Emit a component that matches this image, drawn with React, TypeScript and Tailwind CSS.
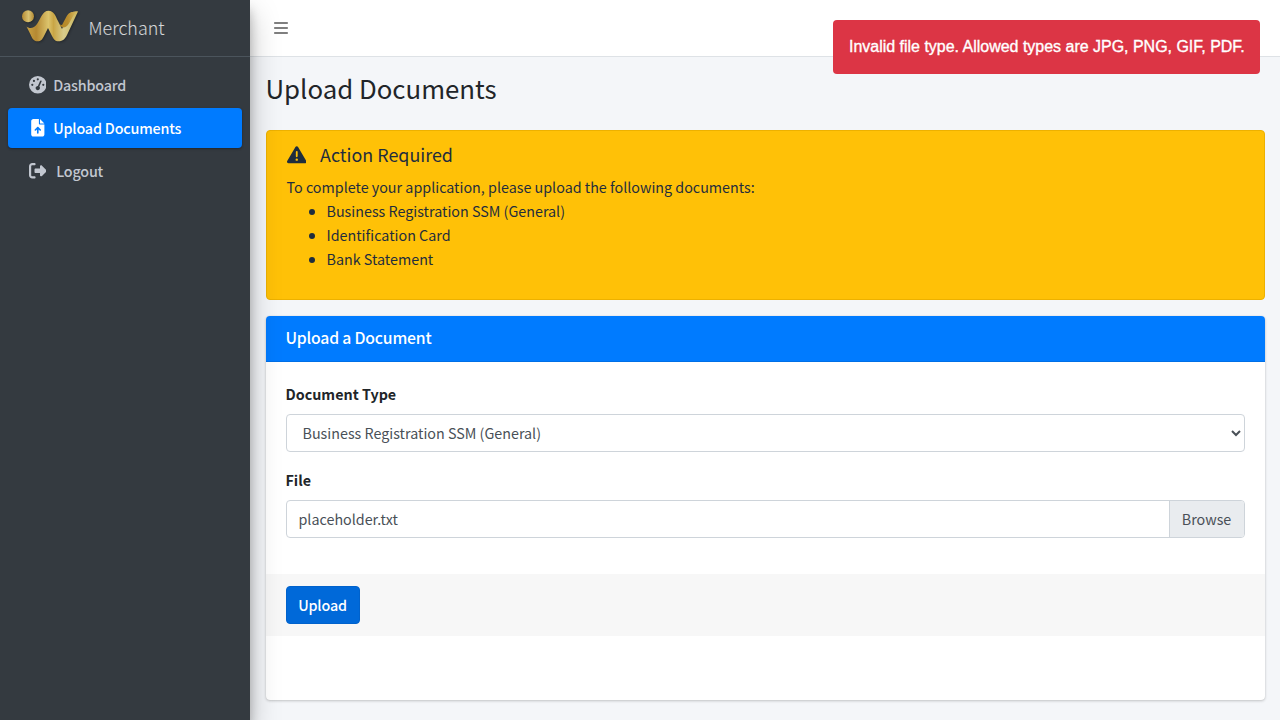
import type { ReactNode } from "react";
import { FaBars, FaFileArrowUp, FaGaugeHigh, FaRightFromBracket, FaTriangleExclamation } from "react-icons/fa6";

const requiredDocuments = ["Business Registration SSM (General)", "Identification Card", "Bank Statement"];

function Logo() {
  return (
    <svg aria-hidden className="mt-[3px] ml-[21px] h-[35px] w-[59px] drop-shadow-[1px_1px_1px_rgba(0,0,0,0.3)]" viewBox="0 0 59 35">
      <defs>
        <linearGradient id="gold-dot" x1="0" x2="1" y1="0" y2="0">
          <stop offset="0" stopColor="#b58a32" />
          <stop offset="0.55" stopColor="#d9c272" />
          <stop offset="1" stopColor="#b38a35" />
        </linearGradient>
        <linearGradient gradientUnits="userSpaceOnUse" id="gold-wave" x1="6" x2="57" y1="0" y2="0">
          <stop offset="0" stopColor="#c9a243" />
          <stop offset="0.18" stopColor="#b58832" />
          <stop offset="0.42" stopColor="#dcc46c" />
          <stop offset="0.52" stopColor="#c9a545" />
          <stop offset="0.72" stopColor="#d8cc8c" />
          <stop offset="1" stopColor="#cdb75c" />
        </linearGradient>
        <linearGradient id="gold-fold" x1="0" x2="1" y1="0" y2="0">
          <stop offset="0" stopColor="#b18422" />
          <stop offset="0.45" stopColor="#b98d2e" />
          <stop offset="1" stopColor="#dcc36a" />
        </linearGradient>
      </defs>
      <circle cx="7" cy="7.300" fill="url(#gold-dot)" r="6" />
      <path
        d="M5.500 17.500C8.500 20 13 19.500 16 15C20 9 21.500 1.700 27.500 1.700C33 1.700 34.500 7 37 12L41 20L46.500 8C48.500 3.500 51 2.500 57 2.500L46 26C43.500 31 41 32.300 37.500 32.300C34 32.300 32.500 30 31 27L27 19L23.500 26C21 31 20 32.300 16.500 32.300C12.500 32.300 11 29 9.500 25.500Z"
        fill="url(#gold-wave)"
      />
      <path d="M38.500 15.500C41 20 45 19 48 14.500C51 10 52 5 57 2.500C51 2.500 48 3 45.500 7.500L41 16Z" fill="url(#gold-fold)" />
    </svg>
  );
}

function NavItem({ icon, label, active }: { icon: ReactNode; label: string; active?: boolean }) {
  return (
    <li>
      <a
        className={
          active
            ? "flex h-10 items-center rounded bg-[#007bff] pl-4 text-white shadow-[0_1px_3px_rgba(0,0,0,0.12),0_1px_2px_rgba(0,0,0,0.24)]"
            : "flex h-10 items-center rounded pl-4 text-[#c2c7d0]"
        }
        href="#"
      >
        {icon}
        <span className="font-medium tracking-[-0.012em]">{label}</span>
      </a>
    </li>
  );
}

function Sidebar() {
  return (
    <aside className="relative z-10 w-[250px] shrink-0 bg-[#343a40] shadow-[0_14px_28px_rgba(0,0,0,0.25),0_10px_10px_rgba(0,0,0,0.22)]">
      <a className="flex h-[57px] items-center border-b border-[#4b545c] pb-1.5" href="#">
        <Logo />
        <span className="mt-1 ml-[8.5px] text-[17.9px] font-light text-white/80">Merchant</span>
      </a>
      <ul className="flex flex-col gap-[3px] px-2 pt-2">
        <NavItem icon={<FaGaugeHigh aria-hidden className="mr-[7px] ml-[4.6px] size-[17.6px]" />} label="Dashboard" />
        <NavItem active icon={<FaFileArrowUp aria-hidden className="mr-[7px] ml-[4.6px] size-[17.6px]" />} label="Upload Documents" />
        <NavItem icon={<FaRightFromBracket aria-hidden className="mr-[10px] ml-[4.6px] size-[17.6px]" />} label="Logout" />
      </ul>
    </aside>
  );
}

function Warning() {
  return (
    <div className="h-[170px] rounded border border-[#edb100] bg-[#ffc107] px-5 pt-3 text-[#1f2d3d]">
      <h5 className="mb-2 flex h-6 items-center text-[17.9px]">
        <FaTriangleExclamation aria-hidden className="mr-[14px] size-[19.5px]" />
        <span className="pb-0.5">Action Required</span>
      </h5>
      <p>To complete your application, please upload the following documents:</p>
      <ul className="list-disc pl-10">
        {requiredDocuments.map((name) => (
          <li key={name}>{name}</li>
        ))}
      </ul>
    </div>
  );
}

function UploadCard() {
  return (
    <section className="mt-4 h-[384px] rounded bg-white shadow-[0_0_1px_rgba(0,0,0,0.125),0_1px_3px_rgba(0,0,0,0.2)]">
      <h3 className="flex h-[46px] items-center rounded-t border-b border-[#006fe6] bg-[#007bff] px-5 pb-0.5 text-[15.75px] font-medium tracking-[-0.012em] text-white">
        Upload a Document
      </h3>
      <div className="h-[212px] px-5 pt-5">
        <label className="mb-2 block font-bold" htmlFor="document-type">Document Type</label>
        <select className="block h-[38px] w-full rounded border border-[#ced4da] bg-white px-3 pb-0.5 text-[#495057]" id="document-type">
          {requiredDocuments.map((name) => (
            <option key={name}>{name}</option>
          ))}
        </select>
        <div className="mt-4 mb-2 font-bold">File</div>
        <div className="flex h-[38px] overflow-hidden rounded border border-[#ced4da] text-[#495057]">
          <span className="flex flex-1 items-center pl-3">placeholder.txt</span>
          <span className="flex w-[75px] items-center justify-center border-l border-[#ced4da] bg-[#e9ecef]">Browse</span>
        </div>
      </div>
      <div className="h-[62px] bg-[#f7f7f7] px-5 py-3">
        <button className="h-[38px] w-[74px] rounded border border-[#0062cc] bg-[#0069d9] font-medium tracking-[-0.012em] text-white" type="button">
          Upload
        </button>
      </div>
    </section>
  );
}

export default function App() {
  return (
    <div className="flex h-[720px] w-[1280px] overflow-hidden bg-[#f4f6f9] font-['Noto_Sans_CJK_SC',sans-serif] text-[14.32px] leading-6 text-[#212529]">
      <Sidebar />
      <main className="flex-1">
        <nav className="flex h-[57px] items-center border-b border-[#dee2e6] bg-white pl-[23px]">
          <FaBars aria-hidden className="size-4 text-black/50" />
        </nav>
        <div className="px-[15.5px]">
          <h1 className="flex h-[73px] items-center pb-3 text-[25.8px]">Upload Documents</h1>
          <Warning />
          <UploadCard />
        </div>
      </main>
      <div className="absolute top-5 left-[833px] z-20 flex h-[54px] w-[427px] items-center rounded bg-[#dc3545] pl-4 font-['Liberation_Sans',Arial,sans-serif] text-base tracking-[-0.015px] whitespace-nowrap text-white [-webkit-text-stroke:0.35px_white]">
        Invalid file type. Allowed types are JPG, PNG, GIF, PDF.
      </div>
    </div>
  );
}
